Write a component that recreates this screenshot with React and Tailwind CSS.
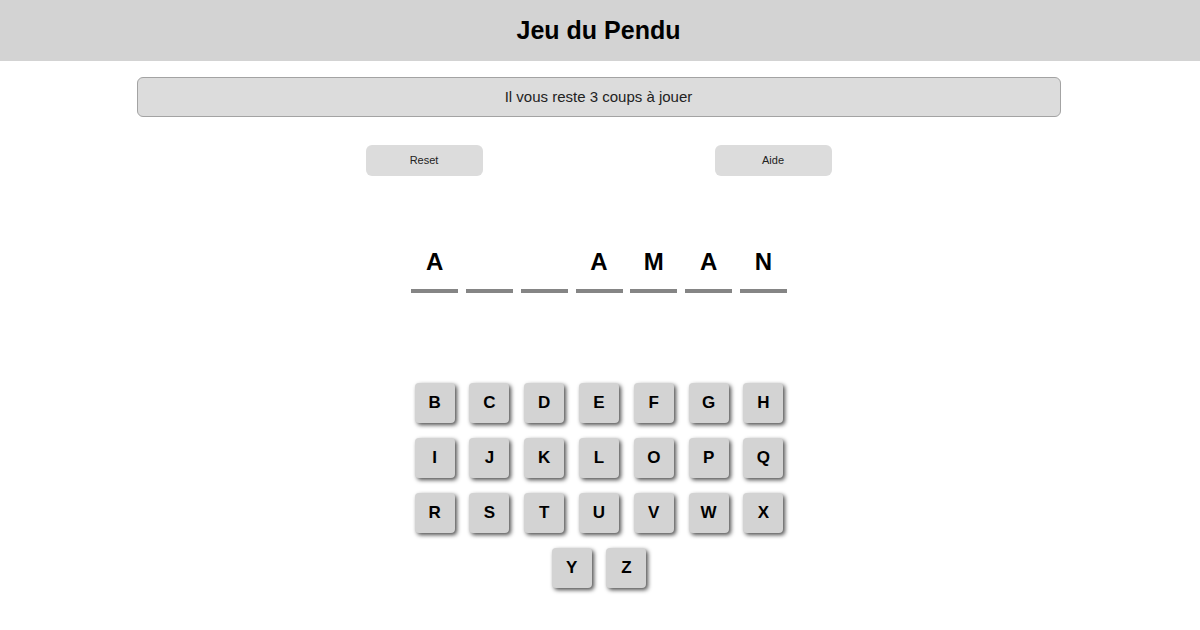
const word = ["A", "", "", "A", "M", "A", "N"];
const letters = "BCDEFGHIJKLOPQRSTUVWXYZ".split("");

export default function App() {
  return (
    <div className="min-h-[630px] bg-white pr-[3px] font-['Liberation_Sans',Arial,sans-serif] text-black">
      <header className="-mr-[3px] flex h-[61px] items-center justify-center bg-[#d3d3d3] pr-[3px]">
        <h1 className="text-[25px] font-bold">Jeu du Pendu</h1>
      </header>

      <div className="mx-auto mt-[16px] flex h-[40px] w-[924px] items-center justify-center rounded-[6px] border border-[#a3a3a3] bg-[#dcdcdc] text-[15px] text-[#222]">
        Il vous reste 3 coups à jouer
      </div>

      <div className="mt-[28px] flex justify-center gap-[232px]">
        <button type="button" className="h-[31px] w-[117px] rounded-[6px] bg-[#dcdcdc] text-[11px] text-[#222]">Reset</button>
        <button type="button" className="h-[31px] w-[117px] rounded-[6px] bg-[#dcdcdc] text-[11px] text-[#222]">Aide</button>
      </div>

      <div className="mt-[69px] flex justify-center gap-[7.8px] pl-[1px]">
        {word.map((l, i) => (
          <div key={i} className="flex w-[47px] flex-col items-center">
            <div className="flex h-[34px] items-center text-[24px] font-bold">{l}</div>
            <div className="mt-[10px] h-[4px] w-full bg-[#858585]" />
          </div>
        ))}
      </div>

      <div className="mx-auto mt-[90px] flex w-[386px] flex-wrap justify-center pl-[1px]">
        {letters.map((l) => (
          <button
            key={l}
            type="button"
            className="mx-[7.4px] mb-[15px] flex h-[40px] w-[40px] items-center justify-center rounded-[4px] bg-[#d3d3d3] text-[17px] font-bold shadow-[2px_2px_4px_rgba(0,0,0,0.7)]"
          >
            {l}
          </button>
        ))}
      </div>
    </div>
  );
}
